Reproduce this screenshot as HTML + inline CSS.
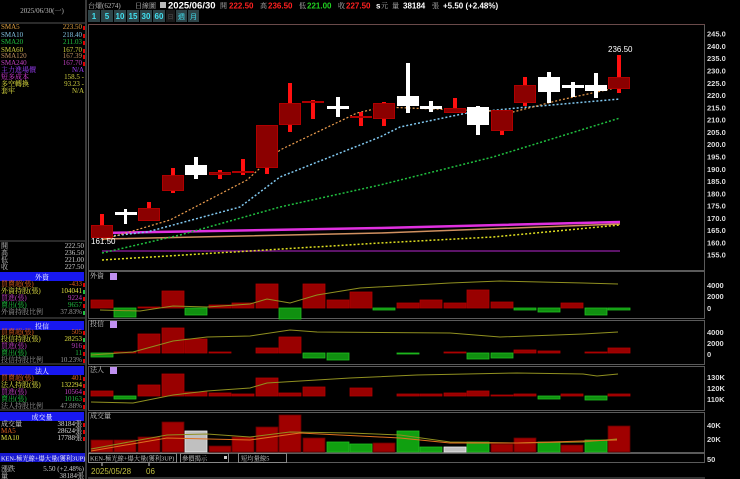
<!DOCTYPE html>
<html><head><meta charset="utf-8"><style>
html,body{margin:0;padding:0;background:#000;width:740px;height:479px;overflow:hidden}
svg{display:block;font-family:"Liberation Sans","Noto Sans CJK TC",sans-serif;font-size:8px}
.s{font-family:"Liberation Serif","Noto Serif CJK SC",serif}
</style></head><body>
<svg width="740" height="479" viewBox="0 0 740 479" xmlns="http://www.w3.org/2000/svg">
<rect width="740" height="479" fill="#000"/>
<rect x="85" y="0" width="2" height="479" fill="#3a3a3a"/>
<line x1="0" y1="23" x2="85" y2="23" stroke="#555"/>
<text x="42" y="13" fill="#bbb" text-anchor="middle" class="s" font-size="7">2025/06/30(一)</text>
<g class="s" font-size="7">
<text x="1" y="29" fill="#e0a040">SMA5</text><text x="82" y="29" fill="#e0a040" text-anchor="end">223.50</text>
<text x="1" y="37" fill="#80c0e0">SMA10</text><text x="82" y="37" fill="#80c0e0" text-anchor="end">218.40</text>
<text x="1" y="44" fill="#20c040">SMA20</text><text x="82" y="44" fill="#20c040" text-anchor="end">211.03</text>
<text x="1" y="52" fill="#d0d040">SMA60</text><text x="82" y="52" fill="#d0d040" text-anchor="end">167.70</text>
<text x="1" y="58" fill="#c09060">SMA120</text><text x="82" y="58" fill="#c09060" text-anchor="end">167.39</text>
<text x="1" y="65" fill="#c040c0">SMA240</text><text x="82" y="65" fill="#c040c0" text-anchor="end">167.70</text>
<text x="1" y="72" fill="#a040ff">主力進場價</text><text x="84" y="72" fill="#a040ff" text-anchor="end">N/A</text>
<text x="1" y="79" fill="#e040e0">短多成本</text><text x="84" y="79" fill="#d0d040" text-anchor="end">158.5 -</text>
<text x="1" y="86" fill="#e0e040">多空轉換</text><text x="84" y="86" fill="#d0d040" text-anchor="end">93.23 -</text>
<text x="1" y="93" fill="#e0e040">套牢</text><text x="84" y="93" fill="#d0d040" text-anchor="end">N/A</text>
</g>
<g fill="#e00000"><rect x="83" y="26" width="2" height="4"/><rect x="83" y="34" width="2" height="4"/><rect x="83" y="41" width="2" height="4"/><rect x="83" y="49" width="2" height="4"/><rect x="83" y="55" width="2" height="4"/><rect x="83" y="62" width="2" height="4"/></g>
<line x1="0" y1="241" x2="85" y2="241" stroke="#555"/>
<g class="s" font-size="7" fill="#ccc">
<text x="1" y="248">開</text><text x="84" y="248" text-anchor="end">222.50</text>
<text x="1" y="255">高</text><text x="84" y="255" text-anchor="end">236.50</text>
<text x="1" y="262">低</text><text x="84" y="262" text-anchor="end">221.00</text>
<text x="1" y="269">收</text><text x="84" y="269" text-anchor="end">227.50</text>
</g>
<g class="s" font-size="7">
<rect x="0" y="272" width="84" height="9" fill="#1818f0"/><text x="42" y="279.5" fill="#fff" text-anchor="middle">外資</text>
<text x="1" y="286" fill="#e06020">買賣超(張)</text><text x="82" y="286" fill="#e06020" text-anchor="end">-433</text>
<text x="1" y="293" fill="#e0e040">外資持股(張)</text><text x="82" y="293" fill="#e0e040" text-anchor="end">104041</text>
<text x="1" y="300" fill="#c040c0">買進(張)</text><text x="82" y="300" fill="#c040c0" text-anchor="end">9224</text>
<text x="1" y="307" fill="#20c040">賣出(張)</text><text x="82" y="307" fill="#20c040" text-anchor="end">9657</text>
<text x="1" y="314" fill="#999">外資持股比例</text><text x="82" y="314" fill="#999" text-anchor="end">37.83%</text>
<line x1="0" y1="318" x2="85" y2="318" stroke="#555"/>
<rect x="0" y="321" width="84" height="9" fill="#1818f0"/><text x="42" y="328.5" fill="#fff" text-anchor="middle">投信</text>
<text x="1" y="334" fill="#e06020">買賣超(張)</text><text x="82" y="334" fill="#e06020" text-anchor="end">505</text>
<text x="1" y="341" fill="#e0e040">投信持股(張)</text><text x="82" y="341" fill="#e0e040" text-anchor="end">28253</text>
<text x="1" y="348" fill="#c040c0">買進(張)</text><text x="82" y="348" fill="#c040c0" text-anchor="end">916</text>
<text x="1" y="355" fill="#20c040">賣出(張)</text><text x="82" y="355" fill="#20c040" text-anchor="end">11</text>
<text x="1" y="362" fill="#999">投信持股比例</text><text x="82" y="362" fill="#999" text-anchor="end">10.23%</text>
<line x1="0" y1="364" x2="85" y2="364" stroke="#555"/>
<rect x="0" y="366" width="84" height="9" fill="#1818f0"/><text x="42" y="373.5" fill="#fff" text-anchor="middle">法人</text>
<text x="1" y="380" fill="#e06020">買賣超(張)</text><text x="82" y="380" fill="#e06020" text-anchor="end">401</text>
<text x="1" y="387" fill="#e0e040">法人持股(張)</text><text x="82" y="387" fill="#e0e040" text-anchor="end">132294</text>
<text x="1" y="394" fill="#c040c0">買進(張)</text><text x="82" y="394" fill="#c040c0" text-anchor="end">10564</text>
<text x="1" y="401" fill="#20c040">賣出(張)</text><text x="82" y="401" fill="#20c040" text-anchor="end">10163</text>
<text x="1" y="408" fill="#999">法人持股比例</text><text x="82" y="408" fill="#999" text-anchor="end">47.88%</text>
<line x1="0" y1="410" x2="85" y2="410" stroke="#555"/>
<rect x="0" y="412" width="84" height="9" fill="#1818f0"/><text x="42" y="419.5" fill="#fff" text-anchor="middle">成交量</text>
<text x="1" y="426" fill="#ddd">成交量</text><text x="82" y="426" fill="#ddd" text-anchor="end">38184張</text>
<text x="1" y="433" fill="#e06020">MA5</text><text x="82" y="433" fill="#ddd" text-anchor="end">28624張</text>
<text x="1" y="440" fill="#e0e040">MA10</text><text x="82" y="440" fill="#ddd" text-anchor="end">17788張</text>
<rect x="0" y="453" width="85" height="9" fill="#1818d0"/><text x="1" y="460.5" fill="#fff" font-size="6.3">KEN-極光線+爆大量(獲利3UP)</text>
<text x="1" y="471" fill="#ccc">漲跌</text><text x="84" y="471" fill="#ccc" text-anchor="end">5.50 (+2.48%)</text>
<text x="1" y="478" fill="#ccc">量</text><text x="84" y="478" fill="#ccc" text-anchor="end">38184張</text>
</g>
<g fill="#e00000"><rect x="83" y="283" width="2" height="4"/><rect x="83" y="290" width="2" height="4" fill="#20c040"/><rect x="83" y="297" width="2" height="4"/><rect x="83" y="304" width="2" height="4"/><rect x="83" y="311" width="2" height="4" fill="#20c040"/>
<rect x="83" y="331" width="2" height="4"/><rect x="83" y="338" width="2" height="4" fill="#20c040"/><rect x="83" y="345" width="2" height="4"/><rect x="83" y="352" width="2" height="4"/><rect x="83" y="359" width="2" height="4"/>
<rect x="83" y="377" width="2" height="4"/><rect x="83" y="384" width="2" height="4"/><rect x="83" y="391" width="2" height="4"/><rect x="83" y="398" width="2" height="4"/><rect x="83" y="405" width="2" height="4"/>
<rect x="83" y="423" width="2" height="4"/><rect x="83" y="430" width="2" height="4"/><rect x="83" y="437" width="2" height="4"/></g>

<g font-size="8">
<text x="88" y="8" fill="#bbb" class="s" font-size="7">台燿(6274)</text>
<text x="135" y="8" fill="#bbb" class="s" font-size="7">日線圖</text>
<rect x="160" y="2" width="6" height="6" fill="#bbb"/>
<text x="168" y="8.5" fill="#fff" font-weight="bold" font-size="9.5">2025/06/30</text>
<text x="220" y="8" fill="#bbb" class="s" font-size="7">開</text><text x="229" y="8.5" fill="#ff2020" font-weight="bold">222.50</text>
<text x="260" y="8" fill="#bbb" class="s" font-size="7">高</text><text x="268" y="8.5" fill="#ff2020" font-weight="bold">236.50</text>
<text x="299" y="8" fill="#bbb" class="s" font-size="7">低</text><text x="307" y="8.5" fill="#20d020" font-weight="bold">221.00</text>
<text x="338" y="8" fill="#bbb" class="s" font-size="7">收</text><text x="346" y="8.5" fill="#ff2020" font-weight="bold">227.50</text>
<text x="376" y="8.5" fill="#fff" font-weight="bold">s</text><text x="381" y="8" fill="#bbb" class="s" font-size="7">元</text>
<text x="392" y="8" fill="#bbb" class="s" font-size="7">量</text><text x="403" y="8.5" fill="#fff" font-weight="bold">38184</text>
<text x="432" y="8" fill="#bbb" class="s" font-size="7">張</text><text x="443" y="8.5" fill="#fff" font-weight="bold">+5.50 (+2.48%)</text>
</g>
<g font-size="8" font-weight="bold" fill="#40e0f0">
<rect x="88" y="10" width="12" height="12" fill="#2e4448"/><text x="94" y="19" text-anchor="middle">1</text>
<rect x="101" y="10" width="12" height="12" fill="#2e4448"/><text x="107" y="19" text-anchor="middle">5</text>
<rect x="114" y="10" width="12" height="12" fill="#2e4448"/><text x="120" y="19" text-anchor="middle">10</text>
<rect x="127" y="10" width="12" height="12" fill="#2e4448"/><text x="133" y="19" text-anchor="middle">15</text>
<rect x="140" y="10" width="12" height="12" fill="#2e4448"/><text x="146" y="19" text-anchor="middle">30</text>
<rect x="153" y="10" width="12" height="12" fill="#2e4448"/><text x="159" y="19" text-anchor="middle">60</text>
<rect x="166" y="10" width="9" height="12" fill="#1a1a1a"/><text x="170.5" y="19" text-anchor="middle" fill="#555" font-weight="normal" font-size="6">日</text>
<rect x="176" y="10" width="11" height="12" fill="#2e4448"/><text x="181.5" y="19" text-anchor="middle" font-weight="normal" font-size="7">週</text>
<rect x="188" y="10" width="11" height="12" fill="#2e4448"/><text x="193.5" y="19" text-anchor="middle" font-weight="normal" font-size="7">月</text>
</g>

<g fill="none" stroke="#5a5a5a" stroke-width="1">
<rect x="88.5" y="24.5" width="616" height="246"/>
<rect x="88.5" y="271.5" width="616" height="47"/>
<rect x="88.5" y="320.5" width="616" height="44"/>
<rect x="88.5" y="366.5" width="616" height="44"/>
<rect x="88.5" y="412.5" width="616" height="40"/>
<rect x="88.5" y="453.5" width="616" height="9"/>
</g>
<line x1="88" y1="24.5" x2="705" y2="24.5" stroke="#6a4a4a"/>

<g font-size="7.5" fill="#ddd" font-weight="bold">
<text x="707" y="36.5">245.0</text><text x="707" y="49">240.0</text><text x="707" y="61">235.0</text><text x="707" y="73.5">230.0</text><text x="707" y="86">225.0</text><text x="707" y="98">220.0</text><text x="707" y="110.5">215.0</text><text x="707" y="122.5">210.0</text><text x="707" y="135">205.0</text><text x="707" y="147">200.0</text><text x="707" y="159.5">195.0</text><text x="707" y="172">190.0</text><text x="707" y="184">185.0</text><text x="707" y="196.5">180.0</text><text x="707" y="208.5">175.0</text><text x="707" y="221">170.0</text><text x="707" y="233">165.0</text><text x="707" y="245.5">160.0</text><text x="707" y="257.5">155.0</text>
<text x="707" y="288">4000</text><text x="707" y="299">2000</text><text x="707" y="311">0</text>
<text x="707" y="335">4000</text><text x="707" y="346">2000</text><text x="707" y="357">0</text>
<text x="707" y="380">130K</text><text x="707" y="391">120K</text><text x="707" y="402">110K</text>
<text x="707" y="428">40K</text><text x="707" y="442">20K</text><text x="707" y="462">50</text>
</g>

<g fill="none">
<polyline points="102,251 620,251" stroke="#7a1a8a" stroke-width="1.5"/>
<polyline points="102,239 380,233 620,224" stroke="#d09060" stroke-width="1.5"/>
<polyline points="102,233 380,228 620,222" stroke="#e030e0" stroke-width="2.5"/>
<polyline points="102,260 380,243 493,237 620,225" stroke="#e0e020" stroke-width="1.5" stroke-dasharray="2,2"/>
<polyline points="102,253 180,235 280,207 380,185 493,157 620,118" stroke="#20c040" stroke-width="1.5" stroke-dasharray="2,2"/>
<polyline points="102,237 147,232 240,207 280,177 380,137 400,127 467,113 517,108 620,99" stroke="#80c8f0" stroke-width="1.5" stroke-dasharray="2,2"/>
<polyline points="102,240 170,220 247,180 280,150 357,113 383,107 513,112 560,100 620,87" stroke="#f0a050" stroke-width="1.2" stroke-dasharray="2,2"/>
</g>

<g>
<g fill="#ff1010">
<rect x="100" y="214" width="4" height="24"/>
<rect x="147" y="202" width="4" height="19"/>
<rect x="171" y="168" width="4" height="25"/>
<rect x="218" y="170" width="4" height="9"/>
<rect x="241" y="159" width="4" height="16"/>
<rect x="265" y="125" width="4" height="49"/>
<rect x="288" y="83" width="4" height="49"/>
<rect x="311" y="100" width="4" height="19"/>
<rect x="359" y="112" width="4" height="14"/>
<rect x="382" y="102" width="4" height="24"/>
<rect x="453" y="98" width="4" height="15"/>
<rect x="500" y="110" width="4" height="25"/>
<rect x="523" y="77" width="4" height="29"/>
<rect x="617" y="55" width="4" height="38"/>
</g>
<g fill="#8b0000" stroke="#b00000" stroke-width="1">
<rect x="91.5" y="225.5" width="21" height="12"/>
<rect x="138.5" y="208.5" width="21" height="12"/>
<rect x="162.5" y="175.5" width="21" height="15"/>
<rect x="209.5" y="172.5" width="21" height="2"/>
<rect x="232.5" y="171.5" width="21" height="1"/>
<rect x="256.5" y="125.5" width="21" height="42"/>
<rect x="279.5" y="103.5" width="21" height="21"/>
<rect x="302.5" y="101.5" width="21" height="1"/>
<rect x="350.5" y="116.5" width="21" height="1"/>
<rect x="373.5" y="103.5" width="21" height="15"/>
<rect x="444.5" y="108.5" width="21" height="4"/>
<rect x="491.5" y="110.5" width="21" height="20"/>
<rect x="514.5" y="85.5" width="21" height="17"/>
<rect x="608.5" y="77.5" width="21" height="11"/>
</g>
<g fill="#fff">
<rect x="124" y="209" width="3" height="15"/><rect x="115" y="212" width="22" height="3"/>
<rect x="194" y="157" width="4" height="22"/><rect x="185" y="165" width="22" height="10"/>
<rect x="336" y="97" width="4" height="20"/><rect x="327" y="106" width="22" height="3"/>
<rect x="406" y="63" width="4" height="50"/><rect x="397" y="96" width="22" height="10"/>
<rect x="429" y="101" width="4" height="11"/><rect x="420" y="106" width="22" height="3"/>
<rect x="476" y="106" width="4" height="29"/><rect x="467" y="107" width="22" height="18"/>
<rect x="547" y="72" width="4" height="31"/><rect x="538" y="77" width="22" height="15"/>
<rect x="571" y="82" width="4" height="15"/><rect x="562" y="85" width="22" height="3"/>
<rect x="594" y="73" width="4" height="25"/><rect x="585" y="85" width="22" height="6"/>
</g>
<text x="608" y="52" fill="#fff" font-size="8">236.50</text>
<text x="91" y="244" fill="#fff" font-size="8">161.50</text>
</g>

<g class="s" font-size="7" fill="#ccc">
<text x="90" y="278">外資</text><rect x="110" y="273" width="7" height="7" fill="#c090f0"/>
<text x="90" y="326">投信</text><rect x="110" y="321" width="7" height="7" fill="#c090f0"/>
<text x="90" y="372">法人</text><rect x="110" y="367" width="7" height="7" fill="#c090f0"/>
<text x="90" y="418">成交量</text>
</g>

<g stroke-width="0.8">
<g fill="#990000" stroke="#b00000">
<rect x="91" y="300" width="22" height="8"/><rect x="138" y="307" width="22" height="1"/><rect x="162" y="291" width="22" height="17"/><rect x="209" y="305" width="22" height="3"/><rect x="232" y="303" width="22" height="5"/><rect x="256" y="284" width="22" height="24"/><rect x="303" y="284" width="22" height="24"/><rect x="327" y="300" width="22" height="8"/><rect x="350" y="292" width="22" height="16"/><rect x="397" y="303" width="22" height="5"/><rect x="420" y="300" width="22" height="8"/><rect x="444" y="303" width="22" height="5"/><rect x="467" y="290" width="22" height="18"/><rect x="491" y="302" width="22" height="6"/><rect x="561" y="303" width="22" height="5"/>
</g>
<g fill="#109010" stroke="#20c020">
<rect x="114" y="308" width="22" height="9"/><rect x="185" y="308" width="22" height="7"/><rect x="279" y="308" width="22" height="11"/><rect x="373" y="308" width="22" height="2"/><rect x="514" y="308" width="22" height="2"/><rect x="538" y="308" width="22" height="4"/><rect x="585" y="308" width="22" height="7"/><rect x="608" y="308" width="22" height="2"/>
</g>
<g fill="#990000" stroke="#b00000">
<rect x="114" y="352" width="22" height="1"/><rect x="138" y="334" width="22" height="19"/><rect x="162" y="328" width="22" height="25"/><rect x="185" y="339" width="22" height="14"/><rect x="209" y="352" width="22" height="1"/><rect x="256" y="348" width="22" height="5"/><rect x="279" y="337" width="22" height="16"/><rect x="444" y="352" width="22" height="1"/><rect x="514" y="350" width="22" height="3"/><rect x="538" y="351" width="22" height="2"/><rect x="585" y="352" width="22" height="1"/><rect x="608" y="348" width="22" height="5"/>
</g>
<g fill="#109010" stroke="#20c020">
<rect x="91" y="353" width="22" height="4"/><rect x="303" y="353" width="22" height="5"/><rect x="327" y="353" width="22" height="7"/><rect x="397" y="353" width="22" height="1"/><rect x="467" y="353" width="22" height="6"/><rect x="491" y="353" width="22" height="5"/>
</g>
<g fill="#990000" stroke="#b00000">
<rect x="91" y="391" width="22" height="5"/><rect x="138" y="385" width="22" height="11"/><rect x="162" y="374" width="22" height="22"/><rect x="185" y="392" width="22" height="4"/><rect x="209" y="393" width="22" height="3"/><rect x="232" y="394" width="22" height="2"/><rect x="256" y="378" width="22" height="18"/><rect x="279" y="393" width="22" height="3"/><rect x="303" y="387" width="22" height="9"/><rect x="350" y="388" width="22" height="8"/><rect x="397" y="394" width="22" height="2"/><rect x="420" y="394" width="22" height="2"/><rect x="444" y="393" width="22" height="3"/><rect x="467" y="391" width="22" height="5"/><rect x="491" y="395" width="22" height="1"/><rect x="514" y="394" width="22" height="2"/><rect x="561" y="394" width="22" height="2"/><rect x="608" y="394" width="22" height="2"/>
</g>
<g fill="#109010" stroke="#20c020">
<rect x="114" y="396" width="22" height="3"/><rect x="538" y="396" width="22" height="3"/><rect x="585" y="396" width="22" height="4"/>
</g>
<g fill="#a00000" stroke="#600000">
<rect x="91" y="440" width="22" height="12"/><rect x="114" y="440" width="22" height="12"/><rect x="138" y="437" width="22" height="15"/><rect x="162" y="422" width="22" height="30"/><rect x="209" y="446" width="22" height="6"/><rect x="232" y="437" width="22" height="15"/><rect x="256" y="427" width="22" height="25"/><rect x="279" y="415" width="22" height="37"/><rect x="303" y="438" width="22" height="14"/><rect x="373" y="443" width="22" height="9"/><rect x="491" y="444" width="22" height="8"/><rect x="514" y="438" width="22" height="14"/><rect x="561" y="445" width="22" height="7"/><rect x="608" y="426" width="22" height="26"/>
</g>
<g fill="#c0c0c0" stroke="#eee"><rect x="185" y="431" width="22" height="21"/><rect x="444" y="447" width="22" height="5"/></g>
<g fill="#10a010" stroke="#20c020">
<rect x="327" y="442" width="22" height="10"/><rect x="350" y="444" width="22" height="8"/><rect x="397" y="431" width="22" height="21"/><rect x="420" y="447" width="22" height="5"/><rect x="467" y="442" width="22" height="10"/><rect x="538" y="442" width="22" height="10"/><rect x="585" y="440" width="22" height="12"/>
</g>
</g>
<g fill="none" stroke-width="1">
<polyline points="100,310 140,311 173,306 207,307 250,304 267,299 290,303 317,295 360,288 450,283 500,281 583,283 618,284" stroke="#909020"/>
<polyline points="91,355 133,352 173,341 207,337 250,336 290,330 317,332 450,333 500,337 583,334 618,332" stroke="#909020"/>
<polyline points="91,402 133,403 173,395 207,391 250,388 267,383 350,378 417,375 517,373 583,374 597,376 618,374" stroke="#909020"/>
<polyline points="91,449 167,435 207,434 250,437 290,432 350,433 400,435 450,442 517,443 583,442 617,439" stroke="#909020"/>
<polyline points="91,451 167,438 250,440 300,433 400,438 450,443 517,443 617,440" stroke="#e07020"/>
</g>
<g font-size="6.3" class="s">
<rect x="88.5" y="453.5" width="88" height="9" fill="none" stroke="#888"/><text x="90" y="460.5" fill="#ccc">KEN-極光線+爆大量(獲利3UP)</text>
<rect x="180.5" y="453.5" width="48" height="9" fill="none" stroke="#888"/><text x="182" y="460.5" fill="#ccc">參價揭示</text><rect x="224" y="456" width="3" height="3" fill="#ccc"/>
<rect x="238.5" y="453.5" width="48" height="9" fill="none" stroke="#888"/><text x="241" y="460.5" fill="#ccc">短均量線5</text>
</g>
<line x1="102" y1="463" x2="102" y2="466" stroke="#ccc"/><line x1="149" y1="463" x2="149" y2="466" stroke="#ccc"/>
<text x="91" y="474" fill="#c0c040" font-size="8">2025/05/28</text>
<text x="146" y="474" fill="#c0c040" font-size="8">06</text>
<rect x="88" y="477" width="617" height="2" fill="#333"/>
</svg>
</body></html>
